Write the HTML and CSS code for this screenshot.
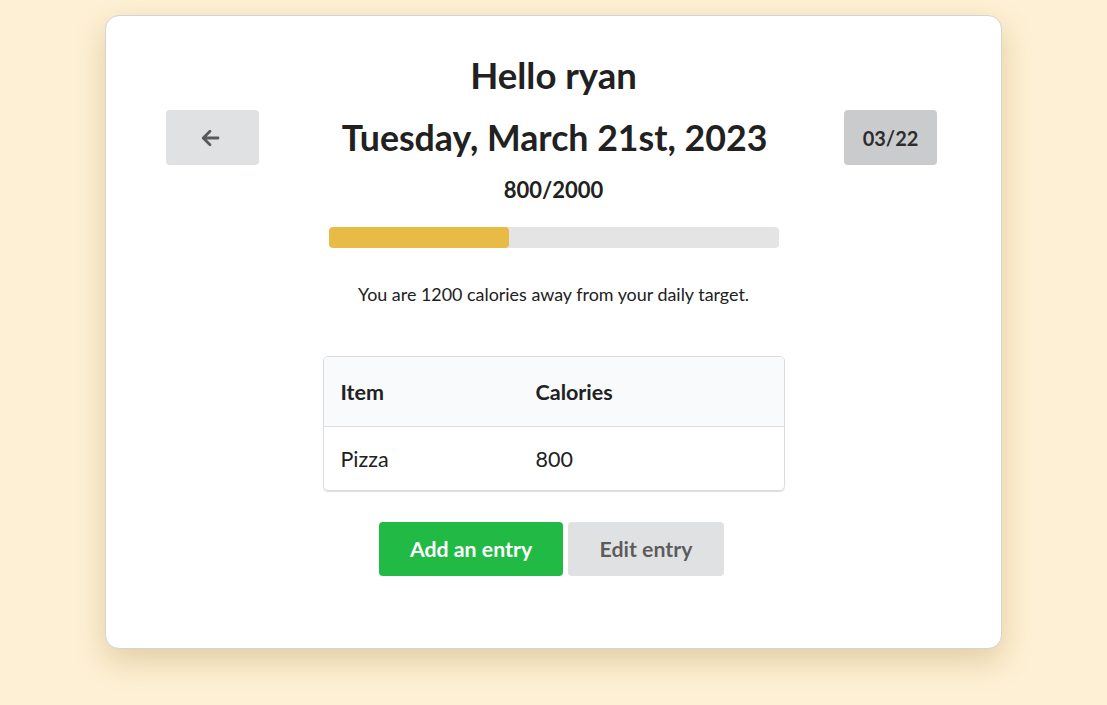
FILE: index.html
```html
<!DOCTYPE html>
<html lang="en">
<head>
<meta charset="utf-8">
<title>Calorie Tracker</title>
<link rel="stylesheet" href="styles.css">
</head>
<body>
<main class="card">
  <h1 class="greeting">Hello ryan</h1>
  <div class="date-row">
    <button class="btn btn-nav" aria-label="Previous day">
      <svg class="arrow" viewBox="0 0 20 20" width="20" height="20" aria-hidden="true">
        <path d="M18 10H3.5M10 3.2L3.2 10l6.8 6.8" fill="none" stroke="currentColor" stroke-width="2.8" stroke-linecap="round" stroke-linejoin="round"/>
      </svg>
    </button>
    <h2 class="date">Tuesday, March 21st, 2023</h2>
    <button class="btn btn-nav btn-next">03/22</button>
  </div>
  <div class="total">800/2000</div>
  <div class="progress"><div class="progress-fill" style="width:40%"></div></div>
  <p class="remaining">You are 1200 calories away from your daily target.</p>
  <table class="entries">
    <thead>
      <tr><th class="col-item">Item</th><th>Calories</th></tr>
    </thead>
    <tbody>
      <tr><td class="col-item">Pizza</td><td>800</td></tr>
    </tbody>
  </table>
  <div class="actions">
    <button class="btn btn-add">Add an entry</button>
    <button class="btn btn-edit">Edit entry</button>
  </div>
</main>
</body>
</html>
```
FILE: styles.css
```css
* { box-sizing: border-box; }
html, body { margin: 0; padding: 0; min-height: 100%; }
html { background: #fef0d4; }
body {
  background: #fef0d4;
  font-family: Lato, "Liberation Sans", sans-serif;
  color: #212121;
  padding: 15px 0 57px;
  min-height: 705px;
}
.card {
  width: 897px;
  height: 634px;
  margin: 0 auto;
  background: #fff;
  border: 1px solid #d4d4d5;
  border-radius: 14px;
  box-shadow: 0 12px 30px rgba(150, 120, 40, 0.28);
  padding: 38px 0 0;
  display: flex;
  flex-direction: column;
  align-items: center;
}
.greeting {
  margin: 0;
  font-size: 36.5px;
  line-height: 42px;
  font-weight: 700;
}
.date-row {
  width: 100%;
  display: flex;
  justify-content: space-between;
  align-items: center;
  margin-top: 14px;
  padding: 0 64px 0 60px;
}
.date {
  margin: 0 0 0 6px;
  font-size: 35.7px;
  line-height: 44px;
  font-weight: 700;
}
.btn {
  border: none;
  border-radius: 4px;
  font-family: Lato, "Liberation Sans", sans-serif;
  font-weight: 700;
  cursor: pointer;
}
.btn-nav {
  width: 93px;
  height: 55px;
  background: #e0e1e2;
  color: rgba(0, 0, 0, 0.6);
  display: flex;
  align-items: center;
  justify-content: center;
  font-size: 20px;
}
.btn-next {
  background: #cacbcd;
  color: rgba(0, 0, 0, 0.8);
}
.arrow { display: block; margin-right: 5px; }
.total {
  margin-top: 12px;
  font-size: 22px;
  line-height: 26px;
  font-weight: 700;
}
.progress {
  margin-top: 24px;
  width: 450px;
  height: 21px;
  background: #e4e4e4;
  border-radius: 4px;
  overflow: hidden;
}
.progress-fill {
  height: 100%;
  background: #e8bb47;
  border-radius: 4px;
}
.remaining {
  margin: 35px 0 0;
  font-size: 17.9px;
  line-height: 22px;
}
.entries {
  margin-top: 51px;
  width: 462px;
  border-collapse: separate;
  border-spacing: 0;
  border: 1px solid #dcdcdd;
  border-radius: 5px;
  box-shadow: 0 1px 1px rgba(34, 36, 38, 0.15);
  font-size: 21.5px;
  text-align: left;
  overflow: hidden;
}
.entries th {
  background: #f9fafb;
  font-weight: 700;
  height: 70px;
  padding: 0 17px;
  border-bottom: 1px solid #e0e0e1;
}
.entries td {
  height: 63px;
  padding: 0 17px;
  font-weight: 400;
}
.entries .col-item { width: 195px; }
.actions {
  margin-top: 31px;
  margin-right: 4px;
  display: flex;
  gap: 5px;
}
.btn-add, .btn-edit {
  height: 54px;
  font-size: 21.3px;
}
.btn-add {
  width: 184px;
  background: #21ba45;
  color: #fff;
}
.btn-edit {
  width: 156px;
  background: #e0e1e2;
  color: rgba(0, 0, 0, 0.6);
}
```
